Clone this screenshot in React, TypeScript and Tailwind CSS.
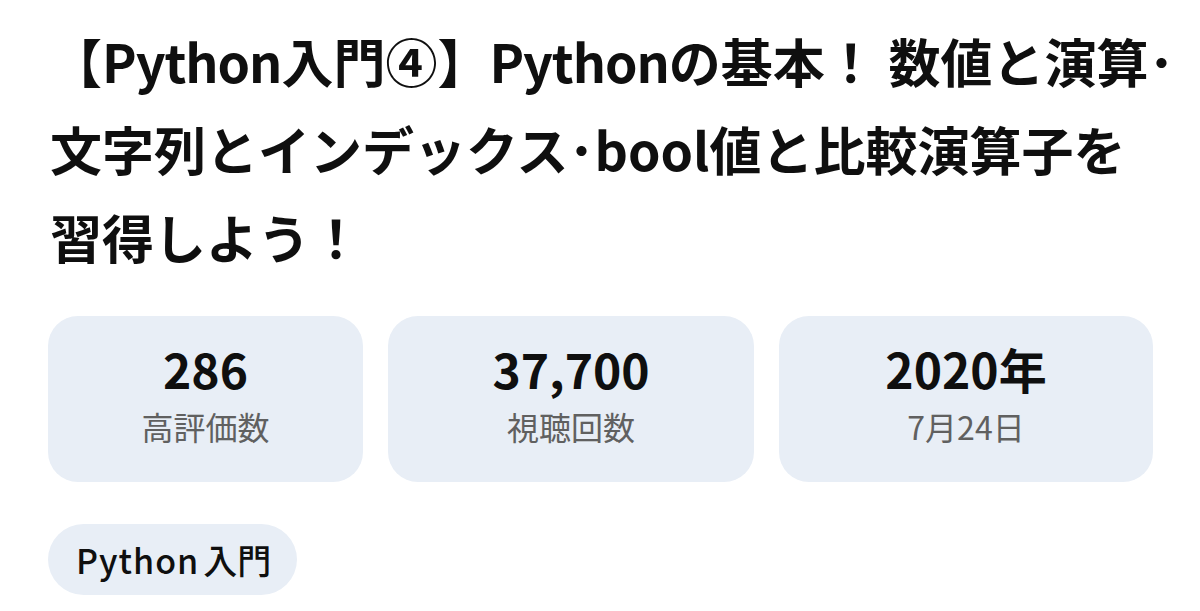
import React from "react";

const cards = [
  { value: "286", label: "高評価数", w: "w-[315px]" },
  { value: "37,700", label: "視聴回数", w: "w-[366px]" },
  { value: "2020年", label: "7月24日", w: "w-[374px]" },
];

export default function App() {
  return (
    <div
      className="w-[1200px] h-[611px] bg-white overflow-hidden"
      style={{ fontFamily: '"Noto Sans CJK JP", "Noto Sans", sans-serif' }}
    >
      <div className="pl-[50px] pr-[30px] pt-[17px]">
        <h1 className="text-[52px] leading-[88px] font-bold text-[#0f0f0f] whitespace-nowrap">
          【<span className="tracking-[-0.02em]">Python</span>入門④】<span className="tracking-[-0.02em]">Python</span>の基本！ 数値と演算･
          <br />
          文字列とインデックス･bool値と比較演算子を
          <br />
          習得しよう！
        </h1>
      </div>
      <div className="flex gap-[25px] pl-[48px] mt-[35px]">
        {cards.map((c) => (
          <div
            key={c.value}
            className={`${c.w} h-[166px] rounded-[30px] bg-[#e8eef6] flex flex-col items-center justify-center pb-[16px]`}
          >
            <div className="text-[48px] leading-[70px] font-bold text-[#0f0f0f]">{c.value}</div>
            <div className="text-[32px] leading-[46px] text-[#606060]">{c.label}</div>
          </div>
        ))}
      </div>
      <div className="pl-[48px] mt-[42px]">
        <div className="inline-flex items-center h-[71px] pl-[28px] pr-[26px] rounded-full bg-[#e8eef6] text-[34px] font-medium text-[#0f0f0f]">
          <span className="tracking-[0.03em]">Python</span>
          <span className="ml-[4px]">入門</span>
        </div>
      </div>
    </div>
  );
}
